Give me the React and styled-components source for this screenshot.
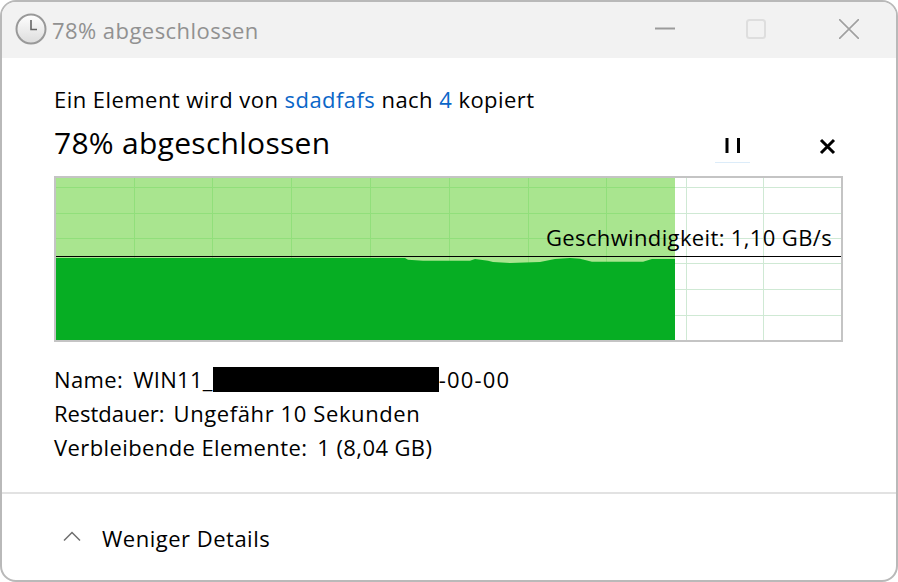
import React from "react";
import styled, { createGlobalStyle } from "styled-components";

const GlobalStyle = createGlobalStyle`
  html, body {
    margin: 0;
    padding: 0;
    background: #ffffff;
  }
  body {
    font-family: "Open Sans", "Noto Sans", "Liberation Sans", sans-serif;
  }
`;

const GRID_X = [134, 212, 291, 370, 449, 528, 606, 686, 763];
const GRID_Y = [187, 213, 238, 263, 289, 315];
const PROFILE = [
  [56, 258], [405, 258], [408, 259.7], [423, 260.7], [470, 260.7], [475, 259],
  [488, 260.7], [493, 262], [510, 263], [540, 262], [555, 259], [570, 258],
  [580, 258.7], [592, 261.7], [643, 261.7], [652, 259], [675, 259], [675, 340], [56, 340],
];

const App = () => {
  return (
    <>
      <GlobalStyle />
      <Window>
        <TitleBar>
          <ClockIcon />
          <WindowTitle>78% abgeschlossen</WindowTitle>
          <WindowControls>
            <svg width="20" height="20" viewBox="0 0 20 20">
              <path d="M0 9.5h20" stroke="#9b9b9b" strokeWidth="2" />
            </svg>
            <svg width="20" height="20" viewBox="0 0 20 20">
              <rect x="1" y="1" width="18" height="18" rx="2.5" fill="none" stroke="#dedede" strokeWidth="2" />
            </svg>
            <svg width="20" height="20" viewBox="0 0 20 20">
              <path d="M0 0l20 20M20 0L0 20" stroke="#a0a0a0" strokeWidth="1.6" />
            </svg>
          </WindowControls>
        </TitleBar>

        <Content>
          <Subtitle>
            Ein Element wird von <Accent>sdadfafs</Accent> nach <Accent>4</Accent> kopiert
          </Subtitle>
          <StatusRow>
            <Heading>78% abgeschlossen</Heading>
            <PauseButton>
              <svg width="16" height="15" viewBox="0 0 16 15">
                <path d="M0.5 0h3v15h-3zM12 0h3v15h-3z" fill="#000" />
              </svg>
            </PauseButton>
            <CancelButton>
              <svg width="17" height="17" viewBox="0 0 17 17">
                <path d="M2 2l13 13M15 2L2 15" stroke="#000" strokeWidth="3" />
              </svg>
            </CancelButton>
          </StatusRow>

          <Chart>
            <svg width="785" height="162" viewBox="56 178 785 162">
              <rect x="56" y="178" width="619" height="162" fill="#a9e58f" />
              {GRID_X.map((x) => (
                <rect key={x} x={x} y="178" width="1" height="162" fill={x < 675 ? "#91df7b" : "#cfe9d4"} />
              ))}
              {GRID_Y.map((y) => (
                <React.Fragment key={y}>
                  <rect x="56" y={y} width="619" height="1" fill="#91df7b" />
                  <rect x="675" y={y} width="166" height="1" fill="#cfe9d4" />
                </React.Fragment>
              ))}
              <polygon points={PROFILE.map((p) => p.join(",")).join(" ")} fill="#06ae23" />
              <rect x="56" y="256" width="785" height="1" fill="#000" />
            </svg>
            <SpeedLabel>Geschwindigkeit: 1,10 GB/s</SpeedLabel>
          </Chart>

          <Details>
            <DetailRow>
              <DetailKey $gap={10}>Name:</DetailKey>
              <DetailValue $spacing={0.25}>WIN11_</DetailValue>
              <Redacted />
              <DetailValue $spacing={1.2}>-00-00</DetailValue>
            </DetailRow>
            <DetailRow>
              <DetailKey $gap={9} $spacing={0}>Restdauer:</DetailKey>
              <DetailValue $spacing={0.6}>Ungefähr 10 Sekunden</DetailValue>
            </DetailRow>
            <DetailRow>
              <DetailKey $gap={10}>Verbleibende Elemente:</DetailKey>
              <DetailValue>1 (8,04 GB)</DetailValue>
            </DetailRow>
          </Details>
        </Content>

        <Footer>
          <Chevron width="18" height="10" viewBox="0 0 18 10">
            <path d="M1 9.5L9 1.5l8 8" fill="none" stroke="#6f6f6f" strokeWidth="1.5" />
          </Chevron>
          <FooterLabel>Weniger Details</FooterLabel>
        </Footer>
      </Window>
    </>
  );
};

const ClockIcon = () => (
  <ClockSvg width="32" height="32" viewBox="0 0 32 32">
    <defs>
      <linearGradient id="clockFace" x1="0" y1="0" x2="0" y2="1">
        <stop offset="0" stopColor="#ffffff" />
        <stop offset="1" stopColor="#dcdcdc" />
      </linearGradient>
    </defs>
    <circle cx="16" cy="16" r="14.5" fill="url(#clockFace)" stroke="#999" strokeWidth="2" />
    <path d="M16 7v9.5h6" fill="none" stroke="#666" strokeWidth="1.6" />
  </ClockSvg>
);

export default App;

const Window = styled.div`
  box-sizing: border-box;
  width: 898px;
  height: 582px;
  display: flex;
  flex-direction: column;
  border: 2px solid #b9b9b9;
  border-radius: 16px;
  background: #ffffff;
  overflow: hidden;
  color: #000000;
`;

const TitleBar = styled.div`
  height: 56px;
  flex: none;
  display: flex;
  align-items: center;
  padding-left: 13px;
  background: #f2f2f2;
`;

const ClockSvg = styled.svg`
  margin-bottom: 3px;
`;

const WindowTitle = styled.div`
  margin-left: 5px;
  font-size: 22px;
  letter-spacing: 0.45px;
  color: #919191;
`;

const WindowControls = styled.div`
  margin-left: auto;
  margin-right: 37px;
  margin-bottom: 2px;
  display: flex;
  align-items: center;
  gap: 71px;
  & > svg:last-child {
    margin-left: 2px;
  }
`;

const Content = styled.div`
  flex: 1;
  display: flex;
  flex-direction: column;
  padding: 26px 53px 0 52px;
`;

const Subtitle = styled.div`
  font-size: 22px;
  line-height: 30px;
  letter-spacing: 0.45px;
`;

const Accent = styled.span`
  color: #0a66c8;
`;

const StatusRow = styled.div`
  display: flex;
  align-items: flex-start;
  height: 55px;
`;

const Heading = styled.div`
  margin-top: 6px;
  font-size: 30px;
  line-height: 46px;
  letter-spacing: 0.28px;
`;

const PauseButton = styled.div`
  margin-left: auto;
  margin-top: 15px;
  width: 35px;
  height: 34px;
  display: flex;
  justify-content: center;
  align-items: center;
  border-bottom: 1px solid #dcecf9;
  box-sizing: border-box;
`;

const CancelButton = styled.div`
  margin-left: 69px;
  margin-right: 7px;
  margin-top: 24px;
  width: 17px;
  height: 17px;
  display: flex;
`;

const Chart = styled.div`
  position: relative;
  box-sizing: border-box;
  width: 789px;
  height: 166px;
  margin-top: 7px;
  border: 2px solid #c4c4c4;
  & > svg {
    display: block;
  }
`;

const SpeedLabel = styled.div`
  position: absolute;
  right: 9px;
  top: 45px;
  font-size: 22px;
  line-height: 28px;
  letter-spacing: 0.36px;
`;

const Details = styled.div`
  margin-top: 20px;
  display: flex;
  flex-direction: column;
`;

const DetailRow = styled.div`
  display: flex;
  align-items: center;
  height: 34px;
  font-size: 22px;
`;

const DetailKey = styled.span`
  margin-right: ${(p) => p.$gap}px;
  letter-spacing: ${(p) => p.$spacing ?? 0.4}px;
`;

const DetailValue = styled.span`
  letter-spacing: ${(p) => p.$spacing ?? 0.4}px;
`;

const Redacted = styled.div`
  width: 226px;
  height: 25px;
  background: #000000;
`;

const Footer = styled.div`
  height: 88px;
  flex: none;
  display: flex;
  align-items: center;
  gap: 21px;
  padding-left: 61px;
  padding-top: 2px;
  box-sizing: border-box;
  border-top: 2px solid #e2e2e2;
`;

const Chevron = styled.svg`
  margin-bottom: 5px;
`;

const FooterLabel = styled.div`
  font-size: 22px;
  letter-spacing: 0.5px;
`;
